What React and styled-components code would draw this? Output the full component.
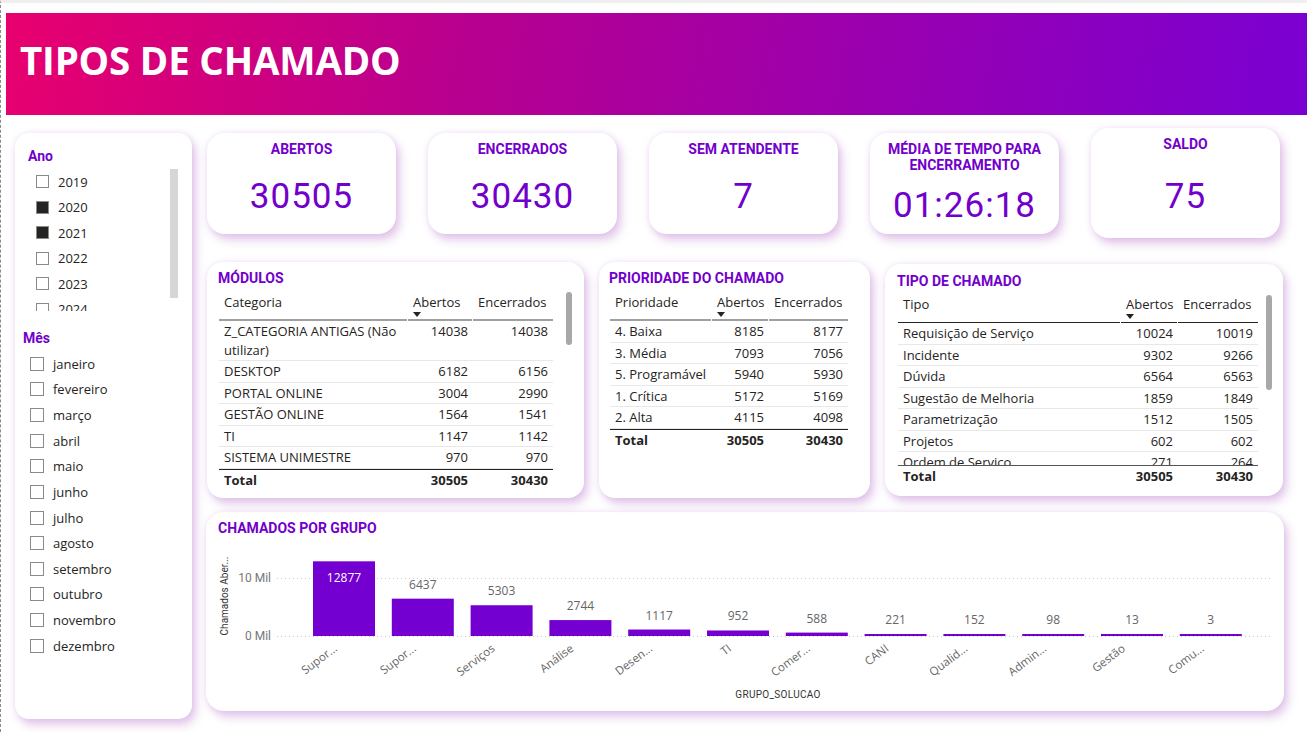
import React from "react"
import styled, { createGlobalStyle } from "styled-components"

const purple = "#7200cc"
const din = `Roboto, "Noto Sans", sans-serif`
const segoe = `"Open Sans", "Noto Sans", sans-serif`

const GlobalStyle = createGlobalStyle`
  html, body {
    margin: 0;
    padding: 0;
    background: #fff;
  }
  body {
    font-family: ${segoe};
    color: #252423;
  }
  * {
    box-sizing: border-box;
  }
`

const Page = styled.div`
  width: 1307px;
  height: 732px;
  overflow: hidden;
  border-left: 1px dashed #8a8a8a;
  border-top: 3px solid #efefef;
  padding-top: 10px;
`

const Header = styled.div`
  margin-left: 5px;
  height: 102px;
  display: flex;
  align-items: center;
  padding: 0 0 8px 14px;
  background: linear-gradient(100deg, #e8006e 0%, #b8008f 35%, #7a00d2 100%);
`

const HeaderTitle = styled.h1`
  margin: 0;
  color: #fff;
  font-family: ${segoe};
  font-weight: 700;
  font-size: 38.5px;
  letter-spacing: -0.2px;
`

const Body = styled.div`
  display: flex;
  padding: 13px 0 0 14px;
`

const card = `
  background: #fff;
  box-shadow: 4px 6px 10px rgba(165, 80, 190, 0.3), 0 0 6px rgba(200, 150, 225, 0.25);
`

/* ---------- slicer ---------- */

const Slicer = styled.div`
  ${card}
  width: 177px;
  height: 586px;
  margin-top: 5px;
  border-radius: 14px;
  padding-top: 15px;
`

const SlicerTitle = styled.div`
  font-family: ${din};
  font-weight: 700;
  font-size: 14px;
  line-height: 16px;
  color: ${purple};
  padding-left: ${p => p.indent}px;
  margin-top: ${p => p.top || 0}px;
`

const ListRow = styled.div`
  display: flex;
  margin-top: 5px;
  padding-left: ${p => p.indent}px;
`

const List = styled.div`
  flex: 1;
  height: ${p => (p.clip ? `${p.clip}px` : "auto")};
  overflow: hidden;
`

const Item = styled.div`
  display: flex;
  align-items: center;
  height: ${p => p.h}px;
  gap: ${p => p.gap}px;
  font-size: 13px;
  color: #252423;
`

const Check = styled.span`
  width: ${p => p.size}px;
  height: ${p => p.size}px;
  border: 1px solid #8a8a8a;
  background: ${p => (p.on ? "#252423" : "#fff")};
  flex-shrink: 0;
`

const SlicerScroll = styled.div`
  width: 8px;
  height: 129px;
  background: #d6d6d6;
  margin-right: 14px;
`

/* ---------- main ---------- */

const Main = styled.div`
  width: 1078px;
  margin-left: 14px;
`

const KpiRow = styled.div`
  display: flex;
  justify-content: space-between;
  align-items: center;
  height: 110px;
  padding: 0 4px 0 1px;
`

const KpiCard = styled.div`
  ${card}
  width: 189px;
  height: ${p => (p.tall ? 110 : 101)}px;
  border-radius: 18px;
  display: flex;
  flex-direction: column;
  align-items: center;
  padding-top: 8px;
  text-align: center;
`

const KpiTitle = styled.div`
  font-family: ${din};
  font-weight: 700;
  font-size: 14px;
  line-height: 16px;
  color: ${purple};
`

const KpiValue = styled.div`
  font-family: ${din};
  font-size: 35px;
  line-height: 40px;
  letter-spacing: 1px;
  color: ${purple};
  margin-top: ${p => p.gap}px;
`

const TablesRow = styled.div`
  display: flex;
  justify-content: space-between;
  align-items: center;
  height: 236px;
  margin-top: 24px;
  padding: 0 1px;
`

const TableCard = styled.div`
  ${card}
  width: ${p => p.w}px;
  height: ${p => p.h}px;
  border-radius: 16px;
  padding: ${p => p.pt}px 11px 0 ${p => p.pl}px;
`

const CardTitle = styled.div`
  font-family: ${din};
  font-weight: 700;
  font-size: 14px;
  line-height: 16px;
  color: ${purple};
`

const TableWrap = styled.div`
  display: flex;
  align-items: flex-start;
  margin-top: ${p => p.top}px;
  margin-left: 1px;
`

const Table = styled.div`
  width: ${p => p.w}px;
  font-size: 13px;
`

const Grid = styled.div`
  display: grid;
  grid-template-columns: ${p => p.cols};
`

const Clip = styled.div`
  height: ${p => (p.clip ? `${p.clip}px` : "auto")};
  overflow: hidden;
`

const HeadCell = styled.div`
  height: 29px;
  padding: 0 5px;
  line-height: 20px;
  border-bottom: ${p => (p.dark ? "1px solid #252423" : "2px solid #a0a0a0")};
  margin-right: ${p => (p.last ? 0 : 1)}px;
  white-space: nowrap;
`

const Caret = styled.div`
  width: 0;
  height: 0;
  border-left: 4px solid transparent;
  border-right: 4px solid transparent;
  border-top: 5px solid #252423;
`

const Cell = styled.div`
  padding: 1px 5px;
  line-height: 18.5px;
  border-bottom: 1px solid #e8e8e8;
  text-align: ${p => (p.num ? "right" : "left")};
  white-space: ${p => (p.wrap ? "normal" : "nowrap")};
`

const TotalCell = styled.div`
  padding: 1px 5px;
  line-height: 19px;
  font-weight: 700;
  border-top: 1px solid ${p => p.line};
  text-align: ${p => (p.num ? "right" : "left")};
`

const TableScroll = styled.div`
  width: 6px;
  height: ${p => p.h}px;
  border-radius: 3px;
  background: #a8a8a8;
  margin: ${p => p.top}px 0 0 ${p => p.left}px;
`

const ChartCard = styled.div`
  ${card}
  height: 199px;
  margin-top: 14px;
  border-radius: 18px;
  padding-top: 8px;
`

const ChartTitle = styled(CardTitle)`
  padding-left: 12px;
`

const ChartSvg = styled.svg`
  display: block;
`

const years = [
  ["2019", false],
  ["2020", true],
  ["2021", true],
  ["2022", false],
  ["2023", false],
  ["2024", false],
]

const months = [
  "janeiro", "fevereiro", "março", "abril", "maio", "junho",
  "julho", "agosto", "setembro", "outubro", "novembro", "dezembro",
]

const kpis = [
  { title: "ABERTOS", value: "30505", gap: 20 },
  { title: "ENCERRADOS", value: "30430", gap: 20 },
  { title: "SEM ATENDENTE", value: "7", gap: 20 },
  { title: "MÉDIA DE TEMPO PARA\nENCERRAMENTO", value: "01:26:18", gap: 13 },
  { title: "SALDO", value: "75", gap: 25, tall: true },
]

const modulos = [
  ["Z_CATEGORIA ANTIGAS (Não utilizar)", 14038, 14038],
  ["DESKTOP", 6182, 6156],
  ["PORTAL ONLINE", 3004, 2990],
  ["GESTÃO ONLINE", 1564, 1541],
  ["TI", 1147, 1142],
  ["SISTEMA UNIMESTRE", 970, 970],
]

const prioridades = [
  ["4. Baixa", 8185, 8177],
  ["3. Média", 7093, 7056],
  ["5. Programável", 5940, 5930],
  ["1. Crítica", 5172, 5169],
  ["2. Alta", 4115, 4098],
]

const tipos = [
  ["Requisição de Serviço", 10024, 10019],
  ["Incidente", 9302, 9266],
  ["Dúvida", 6564, 6563],
  ["Sugestão de Melhoria", 1859, 1849],
  ["Parametrização", 1512, 1505],
  ["Projetos", 602, 602],
  ["Ordem de Serviço", 271, 264],
]

const grupos = [
  ["Supor...", 12877], ["Supor...", 6437], ["Serviços", 5303], ["Análise", 2744],
  ["Desen...", 1117], ["TI", 952], ["Comer...", 588], ["CANI", 221],
  ["Qualid...", 152], ["Admin...", 98], ["Gestão", 13], ["Comu...", 3],
]

const DataTable = ({ cols, w, label, rows, dark, clip, totalLine }) => (
  <Table w={w}>
    <Grid cols={cols}>
      <HeadCell dark={dark}>{label}</HeadCell>
      <HeadCell dark={dark}>
        Abertos
        <Caret />
      </HeadCell>
      <HeadCell dark={dark} last>Encerrados</HeadCell>
    </Grid>
    <Clip clip={clip}>
      <Grid cols={cols}>
        {rows.map(([name, a, e]) => (
          <React.Fragment key={name}>
            <Cell wrap>{name}</Cell>
            <Cell num>{a}</Cell>
            <Cell num>{e}</Cell>
          </React.Fragment>
        ))}
      </Grid>
    </Clip>
    <Grid cols={cols}>
      <TotalCell line={totalLine}>Total</TotalCell>
      <TotalCell line={totalLine} num>30505</TotalCell>
      <TotalCell line={totalLine} num>30430</TotalCell>
    </Grid>
  </Table>
)

const Chart = () => {
  const base = 100
  const scale = 58 / 10000
  return (
    <ChartSvg width="1078" height="175" viewBox="0 0 1078 175">
      <g stroke="#c8c8c8" strokeDasharray="1 3">
        <line x1="71" x2="1066" y1="42.5" y2="42.5" />
        <line x1="71" x2="1066" y1="100.5" y2="100.5" />
      </g>
      <g fontFamily={din} fontSize="12" fill="#777" textAnchor="end">
        <text x="65" y="46">10 Mil</text>
        <text x="65" y="104">0 Mil</text>
      </g>
      <text
        transform="translate(22 60) rotate(-90)"
        textAnchor="middle"
        fontFamily={din}
        fontSize="10"
        fill="#333"
      >
        Chamados Aber...
      </text>
      {grupos.map(([name, v], i) => {
        const x = 107 + i * 78.8
        const h = Math.max(2, v * scale)
        const cx = x + 31
        const top = base - h
        return (
          <g key={i}>
            <rect x={x} y={top} width="62" height={h} fill="#7300d0" />
            <text
              x={cx}
              y={i === 0 ? 46 : top - 10}
              textAnchor="middle"
              fontFamily={segoe}
              fontSize="12"
              fill={i === 0 ? "#fff" : "#666"}
            >
              {v}
            </text>
            <text
              transform={`translate(${cx - 6} 114) rotate(-37)`}
              textAnchor="end"
              fontFamily={segoe}
              fontSize="11.5"
              fill="#666"
            >
              {name}
            </text>
          </g>
        )
      })}
      <text
        x="572"
        y="162"
        textAnchor="middle"
        fontFamily={din}
        fontSize="10"
        letterSpacing="0.3"
        fill="#333"
      >
        GRUPO_SOLUCAO
      </text>
    </ChartSvg>
  )
}

export default function App() {
  return (
    <>
      <GlobalStyle />
      <Page>
        <Header>
          <HeaderTitle>TIPOS DE CHAMADO</HeaderTitle>
        </Header>
        <Body>
          <Slicer>
            <SlicerTitle indent={13}>Ano</SlicerTitle>
            <ListRow indent={21}>
              <List clip={142}>
                {years.map(([y, on]) => (
                  <Item key={y} h={25.5} gap={9}>
                    <Check size={13} on={on} />
                    {y}
                  </Item>
                ))}
              </List>
              <SlicerScroll />
            </ListRow>
            <SlicerTitle indent={8} top={19}>Mês</SlicerTitle>
            <ListRow indent={15}>
              <List>
                {months.map(m => (
                  <Item key={m} h={25.64} gap={9}>
                    <Check size={14} />
                    {m}
                  </Item>
                ))}
              </List>
            </ListRow>
          </Slicer>

          <Main>
            <KpiRow>
              {kpis.map(k => (
                <KpiCard key={k.title} tall={k.tall}>
                  <KpiTitle>
                    {k.title.split("\n").map(l => (
                      <div key={l}>{l}</div>
                    ))}
                  </KpiTitle>
                  <KpiValue gap={k.gap}>{k.value}</KpiValue>
                </KpiCard>
              ))}
            </KpiRow>

            <TablesRow>
              <TableCard w={377} h={236} pt={8} pl={11}>
                <CardTitle>MÓDULOS</CardTitle>
                <TableWrap top={6}>
                  <DataTable
                    cols="189px 65px 80px"
                    w={334}
                    label="Categoria"
                    rows={modulos}
                    totalLine="#252423"
                  />
                  <TableScroll h={53} top={0} left={13} />
                </TableWrap>
              </TableCard>

              <TableCard w={271} h={236} pt={8} pl={10}>
                <CardTitle>PRIORIDADE DO CHAMADO</CardTitle>
                <TableWrap top={6}>
                  <DataTable
                    cols="102px 57px 79px"
                    w={238}
                    label="Prioridade"
                    rows={prioridades}
                    totalLine="#252423"
                  />
                </TableWrap>
              </TableCard>

              <TableCard w={398} h={232} pt={9} pl={12}>
                <CardTitle>TIPO DE CHAMADO</CardTitle>
                <TableWrap top={5}>
                  <DataTable
                    cols="223px 57px 80px"
                    w={360}
                    label="Tipo"
                    rows={tipos}
                    dark
                    clip={142}
                    totalLine="#555"
                  />
                  <TableScroll h={95} top={1} left={8} />
                </TableWrap>
              </TableCard>
            </TablesRow>

            <ChartCard>
              <ChartTitle>CHAMADOS POR GRUPO</ChartTitle>
              <Chart />
            </ChartCard>
          </Main>
        </Body>
      </Page>
    </>
  )
}
